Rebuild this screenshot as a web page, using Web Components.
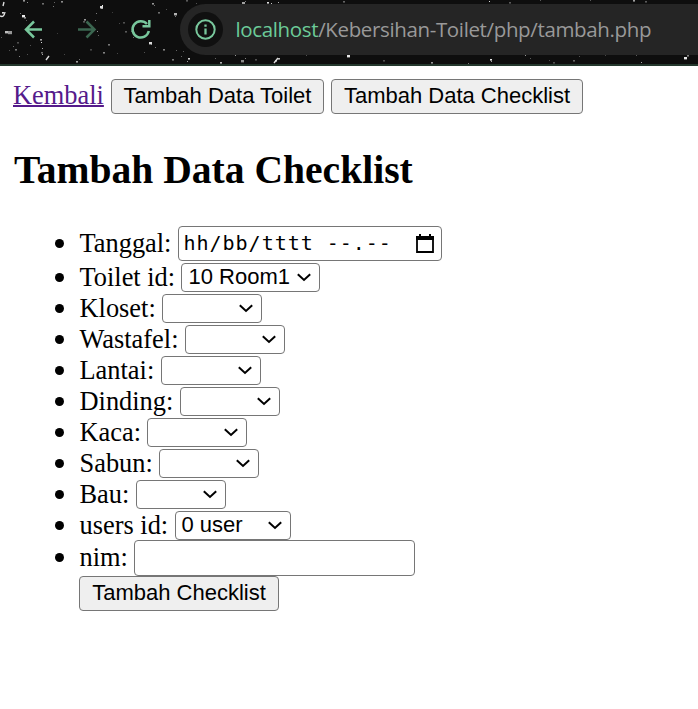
<!DOCTYPE html>
<html lang="id">
<head>
<meta charset="utf-8">
<title>Tambah Data Checklist</title>
<style>
body{margin:0;background:#fff;color:#000;font-family:"Liberation Serif",serif;font-size:26.4px;overflow:hidden}
</style>
</head>
<body>
<checklist-page></checklist-page>
<script>
const define=(name,html,setup)=>customElements.define(name,class extends HTMLElement{
  connectedCallback(){
    if(this.shadowRoot)return;
    const t=document.createElement('template');t.innerHTML=html;
    this.attachShadow({mode:'open'}).append(t.content.cloneNode(true));
    if(setup)setup(this,this.shadowRoot);
  }
});

define('star-field',`<style>:host{display:block;width:698px;height:64px}svg{display:block}</style>
<svg width="698" height="64" viewBox="0 0 698 64"><g id="s"></g>
<path d="M0 16q4 2 5-4M3 6l1-4M46 60l3-4M274 63l4-5" stroke="#ddd" stroke-width="1.4" fill="none"/></svg>`,(el,root)=>{
  // x, y, size, grey level
  const dots=[[2,12,2,220],[22,15,3,235],[24,17,2,150],[20,13,1,120],[26,20,1,90],[5,31,3,190],[8,31,4,150],[23,0,2,150],[27,2,1,140],[42,3,2,110],[53,6,1,120],[54,2,1,100],[61,1,2,140],[100,6,3,220],[101,7,2,220],[102,5,1,240],[96,13,1,120],[84,19,2,150],[83,21,2,90],[95,20,1,120],[123,22,2,80],[119,23,1,70],[125,31,2,90],[97,31,1,140],[98,35,1,100],[108,44,2,120],[103,52,2,130],[90,49,2,70],[76,61,2,160],[79,59,1,110],[40,39,2,160],[41,42,1,220],[42,48,1,170],[41,52,2,110],[42,54,1,170],[17,42,2,80],[30,45,1,80],[13,46,1,110],[15,49,2,120],[19,56,1,130],[9,50,1,80],[1,37,1,90],[27,54,1,80],[64,54,1,70],[152,3,2,150],[154,5,1,110],[158,12,2,110],[174,13,3,180],[175,16,1,120],[166,9,1,80],[186,0,2,90],[196,3,1,80],[131,31,1,80],[133,37,1,110],[149,42,3,220],[151,44,1,150],[155,47,1,120],[163,49,2,130],[144,52,1,80],[176,50,1,100],[172,59,2,120],[188,58,2,210],[187,61,1,160],[183,51,1,90],[181,56,1,100],[215,58,1,100],[220,62,2,180],[117,53,1,70],[112,12,1,60],[57,33,1,60],[242,2,3,160],[245,1,1,120],[267,2,2,220],[271,3,1,200],[278,2,1,170],[343,1,2,100],[489,1,1,220],[509,2,2,90],[540,0,1,90],[590,0,1,90],[633,0,2,160],[645,1,2,90],[241,60,3,140],[245,58,1,130],[255,59,2,80],[275,60,2,210],[278,58,2,190],[235,55,1,150],[306,55,1,80],[347,55,3,230],[383,60,2,80],[431,62,2,150],[490,59,2,230],[491,61,1,160],[525,55,1,150],[530,58,1,90],[549,60,1,80],[553,62,2,80],[573,60,2,100],[579,56,1,80],[605,55,1,70],[636,55,1,90],[641,62,1,170],[684,57,3,230],[687,55,2,130],[468,63,1,120]];
  root.getElementById('s').innerHTML=dots.map(([x,y,s,g])=>`<rect x="${x}" y="${y}" width="${s}" height="${s>1?s*.8:1}" fill="rgb(${g},${g},${g})"/>`).join('');
});

define('browser-bar',`<style>
:host{display:grid;height:64px;background:#0e0e0e;border-bottom:2px solid #24382d;overflow:hidden}
star-field,.row{grid-area:1/1}
.row{display:flex;z-index:1;padding:4px 0 5px}
.tools{width:180px;flex:none}
svg{display:block}
.pill{flex:1;height:51px;background:#252525;border-radius:26px 0 0 26px;display:flex;align-items:center;color:#999;font:20.5px "Open Sans",sans-serif;white-space:pre}
.info{width:35px;height:35px;border-radius:50%;background:#101010;margin:0 12.500px 0 8px;flex:none}
.host{color:#6ccb98}
.url{letter-spacing:-.360px;padding-bottom:2px}
</style><star-field></star-field><div class="row">
<svg class="tools" width="180" height="51" viewBox="0 4 180 51" fill="none" stroke-width="2.500"><path d="M42 29.5H26M34 21.5L26 29.5L34 37.5" stroke="#78c79c"/><path d="M78 29.5H94M86.500 21.500L94.500 29.500L86.500 37.500" stroke="#3b6650"/><path d="M147 24A8.200 8.200 0 1 0 148.800 31" stroke="#78c79c"/><path d="M149.300 20V26.300H142.500" stroke="#78c79c"/></svg>
<div class="pill"><svg class="info" viewBox="0 0 35 35" fill="none"><circle cx="17.500" cy="17.500" r="9.200" stroke="#78c79c" stroke-width="2"/><path d="M17.500 16.500V22.500M17.500 12.500V14.700" stroke="#78c79c" stroke-width="2.300"/></svg><span class="url"><span class="host">localhost</span>/Kebersihan-Toilet/php/tambah.php</span></div></div>`);

define('push-button',`<style>:host{display:inline-flex;box-sizing:border-box;height:35px;border:1px solid #767676;border-radius:4px;background:#efefef;justify-content:center;font:22px/31px "Liberation Sans",sans-serif;white-space:nowrap}</style><slot></slot>`);

define('select-box',`<style>
:host{display:flex;box-sizing:border-box;height:29px;width:100px;border:1px solid #767676;border-radius:4px;background:#fff;justify-content:space-between;align-items:flex-start;padding:0 7px 0 6.500px;font:22px/26px "Liberation Sans",sans-serif;white-space:nowrap}
svg{flex:none;margin-top:8px}</style><span><slot></slot></span><svg width="16" height="10" viewBox="0 0 16 10"><path d="M1.800 2.300L8 8L14.200 2.300" fill="none" stroke="#000" stroke-width="2"/></svg>`);

define('text-box',`<style>:host{display:block;box-sizing:border-box;width:281px;height:36px;border:1px solid #767676;border-radius:4px}</style>`);

define('date-box',`<style>
:host{display:flex;box-sizing:border-box;width:264px;height:35px;border:1px solid #767676;border-radius:4px;align-items:center;justify-content:space-between;padding:0 7px 0 4.500px;font:20px/33px "DejaVu Sans Mono",monospace;letter-spacing:.980px;white-space:pre}
</style><span><slot></slot></span><svg width="18" height="20" viewBox="0 0 18 20"><path d="M1 3H17V18H1Z" fill="none" stroke="#000" stroke-width="1.800"/><path d="M0 2H18V6H0ZM3 0H5V3H3ZM13 0H15V3H13Z"/></svg>`);

define('form-row',`<style>
:host{display:flex;height:31px;line-height:29px}
i{width:9px;height:9px;border-radius:50%;background:#000;margin:var(--dot,10px) 15.500px 0 55px;flex:none}
.l{flex:none;white-space:nowrap}
</style><i></i><span class="l"></span><slot></slot>`,(el,root)=>{
  const l=root.querySelector('.l');l.textContent=el.getAttribute('label');l.style.width=(el.getAttribute('w')-.5)+'px';
});

define('checklist-page',`<style>
:host{display:block}
nav{display:flex;padding:13px 0 0 13px;height:35px;line-height:33px}
a{color:#551a8b;text-decoration:underline;width:98px;text-decoration-thickness:2px}
h2{margin:33px 0 0 14px;font-size:39.600px;line-height:46px;height:46px}
.list{display:flex;flex-direction:column;padding-top:33px}
.first{height:37px;line-height:34px;--dot:13px}
</style>
<browser-bar></browser-bar>
<nav><a>Kembali</a><push-button style="width:213px;margin-right:7px">Tambah Data Toilet</push-button><push-button style="width:252px">Tambah Data Checklist</push-button></nav>
<h2>Tambah Data Checklist</h2>
<div class="list">
<form-row class="first" label="Tanggal:" w="99"><date-box>hh/bb/tttt --.--</date-box></form-row>
<form-row label="Toilet id:" w="102"><select-box style="width:139px">10 Room1</select-box></form-row>
<form-row label="Kloset:" w="83"><select-box></select-box></form-row>
<form-row label="Wastafel:" w="106"><select-box></select-box></form-row>
<form-row label="Lantai:" w="82"><select-box></select-box></form-row>
<form-row label="Dinding:" w="101"><select-box></select-box></form-row>
<form-row label="Kaca:" w="68"><select-box></select-box></form-row>
<form-row label="Sabun:" w="80"><select-box></select-box></form-row>
<form-row label="Bau:" w="57"><select-box style="width:90px"></select-box></form-row>
<form-row label="users id:" w="96" style="height:29px"><select-box style="width:116px;padding-left:5.5px">0 user</select-box></form-row>
<form-row label="nim:" w="55" style="height:36px;line-height:34px;--dot:12.5px"><text-box></text-box></form-row>
<push-button style="width:200px;margin-left:79px">Tambah Checklist</push-button>
</div>`);
</script>
</body>
</html>
